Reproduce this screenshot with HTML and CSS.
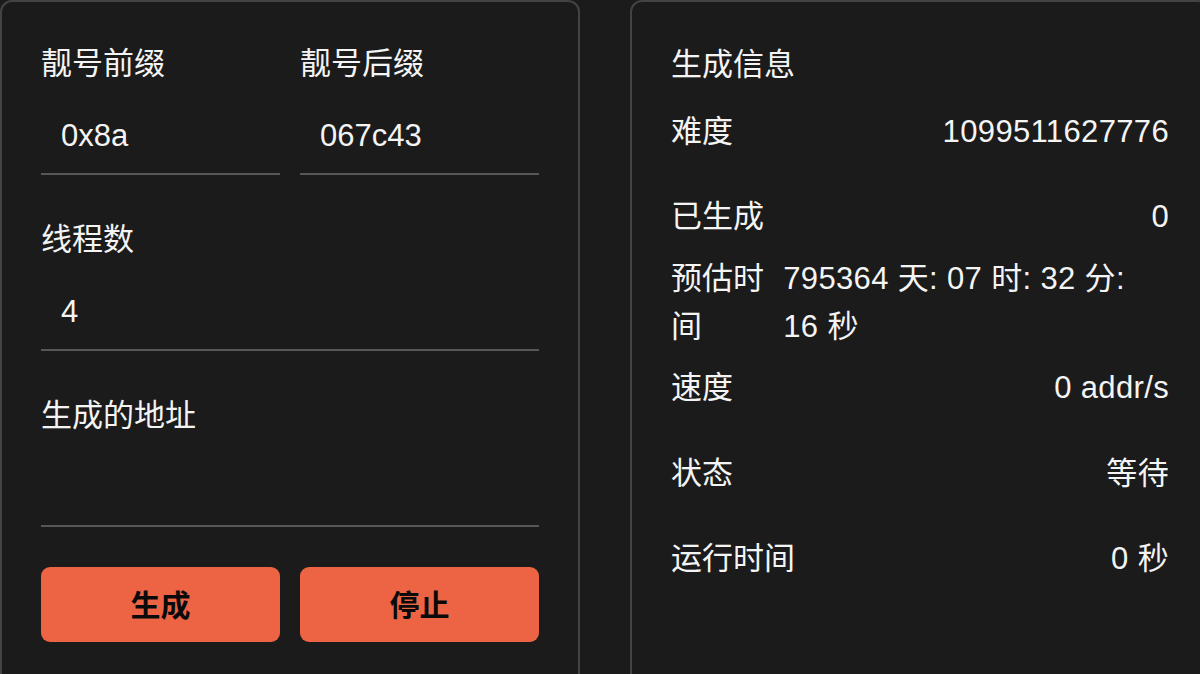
FILE: index.html
```html
<!DOCTYPE html>
<html lang="zh-CN">

<head>
    <meta charset="UTF-8">
    <meta name="viewport" content="width=device-width, initial-scale=1.0">
    <title>靓号生成</title>
    <link rel="stylesheet" href="styles.css">
</head>

<body>
    <div class="page">

        <div class="card">
            <div class="form-grid">
                <div class="field">
                    <label for="prefix">靓号前缀</label>
                    <input type="text" id="prefix" value="0x8a" />
                </div>
                <div class="field">
                    <label for="suffix">靓号后缀</label>
                    <input type="text" id="suffix" value="067c43" />
                </div>
                <div class="field full">
                    <label for="threads">线程数</label>
                    <input type="text" id="threads" value="4" />
                </div>
                <div class="field full">
                    <label for="address">生成的地址</label>
                    <textarea id="address" readonly></textarea>
                </div>
            </div>

            <div class="actions">
                <button class="btn" id="startBtn">生成</button>
                <button class="btn" id="stopBtn">停止</button>
            </div>
        </div>

        <div class="card">
            <div class="info-title">生成信息</div>
            <div class="info-row">
                <span class="info-label">难度</span>
                <span class="info-value">1099511627776</span>
            </div>
            <div class="info-row">
                <span class="info-label">已生成</span>
                <span class="info-value">0</span>
            </div>
            <div class="info-row">
                <span class="info-label">预估时间</span>
                <span class="info-value">795364 天: 07 时: 32 分: 16&nbsp;秒</span>
            </div>
            <div class="info-row">
                <span class="info-label">速度</span>
                <span class="info-value">0 addr/s</span>
            </div>
            <div class="info-row">
                <span class="info-label">状态</span>
                <span class="info-value">等待</span>
            </div>
            <div class="info-row">
                <span class="info-label">运行时间</span>
                <span class="info-value">0 秒</span>
            </div>
        </div>

    </div>
</body>

</html>
```

FILE: styles.css
```css
body {
    font-family: "Liberation Sans", "Noto Sans CJK SC", sans-serif;
    background-color: #1b1b1b;
    color: #f4f4f4;
    margin: 0;
    padding: 0;
    overflow: hidden;
}

.page {
    display: flex;
    gap: 50px;
    width: 1210px;
}

.card {
    flex: 0 0 580px;
    width: 580px;
    min-width: 0;
    box-sizing: border-box;
    min-height: 720px;
    padding: 39px;
    border: 2px solid #434343;
    border-radius: 12px;
    background-color: #1b1b1b;
}

.form-grid {
    display: grid;
    grid-template-columns: minmax(0, 1fr) minmax(0, 1fr);
    column-gap: 20px;
    row-gap: 42px;
}

.field {
    display: flex;
    flex-direction: column;
    gap: 8px;
    min-width: 0;
}

.field.full {
    grid-column: 1 / span 2;
}

.field label {
    font-size: 31px;
    line-height: 46px;
}

.field input,
.field textarea {
    box-sizing: border-box;
    width: 100%;
    min-width: 0;
    height: 80px;
    padding: 4px 20px 0;
    background: transparent;
    border: none;
    border-bottom: 2px solid #575757;
    color: #f4f4f4;
    font-family: inherit;
    font-size: 31px;
    outline: none;
    resize: none;
}

.actions {
    display: grid;
    grid-template-columns: minmax(0, 1fr) minmax(0, 1fr);
    gap: 20px;
    margin-top: 40px;
}

.btn {
    height: 75px;
    padding: 0 0 4px;
    border: none;
    border-radius: 9px;
    background-color: #ec6443;
    color: #0a0a0a;
    font-family: inherit;
    font-size: 30px;
    font-weight: bold;
}

.info-title {
    font-size: 31px;
    line-height: 48px;
}

.info-row {
    display: flex;
    justify-content: space-between;
    align-items: center;
    height: 85.5px;
    font-size: 31px;
    line-height: 48px;
}

.info-value {
    letter-spacing: 0.35px;
}
```
